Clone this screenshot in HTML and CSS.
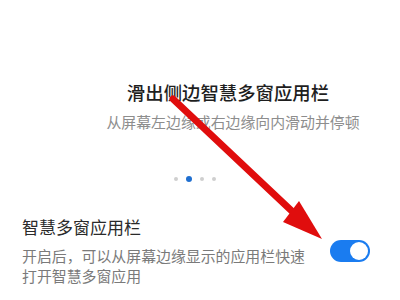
FILE: index.html
```html
<!DOCTYPE html>
<html lang="zh">
<head>
<meta charset="utf-8">
<link rel="stylesheet" href="styles.css">
</head>
<body>
<div class="page">
  <section class="hero">
    <h1 class="hero-title">滑出侧边智慧多窗应用栏</h1>
    <p class="hero-sub">从屏幕左边缘或右边缘向内滑动并停顿</p>
  </section>
  <div class="dots">
    <span class="dot"></span>
    <span class="dot active"></span>
    <span class="dot"></span>
    <span class="dot"></span>
  </div>
  <div class="setting">
    <div class="setting-text">
      <div class="setting-title">智慧多窗应用栏</div>
      <div class="setting-desc">开启后，可以从屏幕边缘显示的应用栏快速<br>打开智慧多窗应用</div>
    </div>
    <div class="toggle"><span class="knob"></span></div>
  </div>
  <svg class="arrow" width="400" height="300" viewBox="0 0 400 300">
    <line x1="173" y1="99" x2="296" y2="215" stroke="#e00d0d" stroke-width="7" stroke-linecap="round"/>
    <polygon points="283,222 299,201 322,239" fill="#e00d0d"/>
  </svg>
</div>
</body>
</html>
```
FILE: styles.css
```css
html, body {
  margin: 0;
  padding: 0;
  background: #ffffff;
}
body {
  font-family: "Noto Sans CJK SC", "Noto Sans", sans-serif;
}
.page {
  position: relative;
  width: 400px;
  height: 300px;
  overflow: hidden;
}
.hero {
  padding: 79px 0 0 56px;
  display: flex;
  flex-direction: column;
  align-items: center;
}
.hero-title {
  margin: 0;
  font-size: 18.4px;
  line-height: 26px;
  font-weight: 500;
  color: #1e1e1e;
}
.hero-sub {
  margin: 7px 0 0 10px;
  font-size: 14.9px;
  line-height: 20px;
  color: #8d8d8d;
}
.dots {
  display: flex;
  justify-content: center;
  align-items: center;
  gap: 8px;
  margin: 43px 0 0 -10px;
  height: 8px;
}
.dot {
  width: 4px;
  height: 4px;
  border-radius: 50%;
  background: #cfcfcf;
}
.dot.active {
  width: 6px;
  height: 6px;
  background: #1f6fd0;
}
.setting {
  display: flex;
  align-items: center;
  padding: 0 30px 0 22px;
  margin-top: 32px;
}
.setting-text {
  flex: 1;
}
.setting-title {
  font-size: 17px;
  line-height: 24px;
  color: #2a2a2a;
}
.setting-desc {
  margin-top: 7px;
  font-size: 14.9px;
  line-height: 20px;
  color: #7a7a7a;
}
.toggle {
  width: 40px;
  height: 22px;
  border-radius: 11px;
  background: #1a7cf0;
  display: flex;
  align-items: center;
  justify-content: flex-end;
  padding-right: 2px;
  box-sizing: border-box;
}
.knob {
  width: 18px;
  height: 18px;
  border-radius: 50%;
  background: #ffffff;
}
.arrow {
  position: absolute;
  left: 0;
  top: 0;
}
```
